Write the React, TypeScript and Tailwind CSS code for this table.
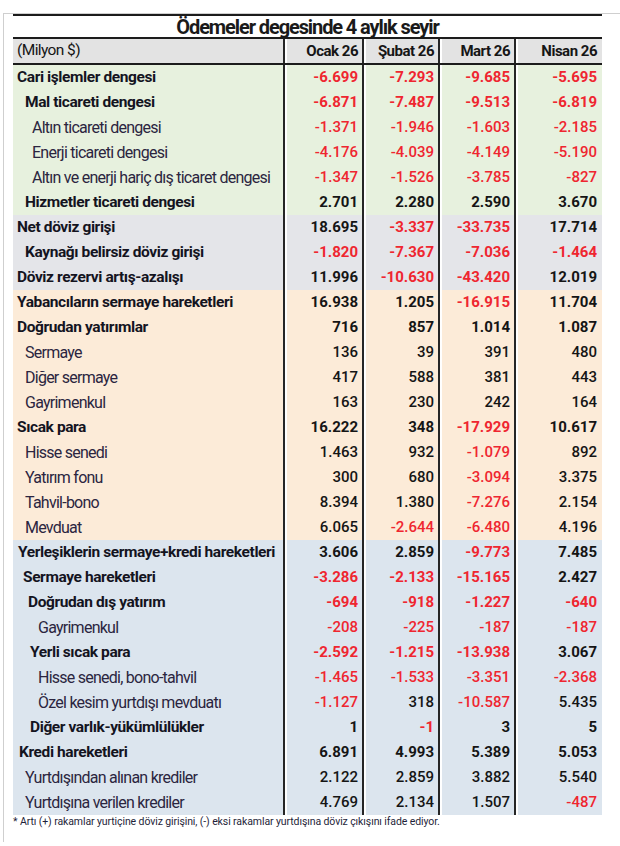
const bg = {
	green: "bg-[#e7f1de]",
	gray: "bg-[#e4e5e9]",
	peach: "bg-[#fcebd8]",
	blue: "bg-[#dce5ee]",
};

type Row = {
	label: string;
	indent: string;
	bold: boolean;
	section: keyof typeof bg;
	values: string[];
};

const rows: Row[] = [
	{ label: "Cari işlemler dengesi", indent: "pl-[4px]", bold: true, section: "green", values: ["-6.699", "-7.293", "-9.685", "-5.695"] },
	{ label: "Mal ticareti dengesi", indent: "pl-[12px]", bold: true, section: "green", values: ["-6.871", "-7.487", "-9.513", "-6.819"] },
	{ label: "Altın ticareti dengesi", indent: "pl-[19px]", bold: false, section: "green", values: ["-1.371", "-1.946", "-1.603", "-2.185"] },
	{ label: "Enerji ticareti dengesi", indent: "pl-[19px]", bold: false, section: "green", values: ["-4.176", "-4.039", "-4.149", "-5.190"] },
	{ label: "Altın ve enerji hariç dış ticaret dengesi", indent: "pl-[19px]", bold: false, section: "green", values: ["-1.347", "-1.526", "-3.785", "-827"] },
	{ label: "Hizmetler ticareti dengesi", indent: "pl-[12px]", bold: true, section: "green", values: ["2.701", "2.280", "2.590", "3.670"] },
	{ label: "Net döviz girişi", indent: "pl-[4px]", bold: true, section: "gray", values: ["18.695", "-3.337", "-33.735", "17.714"] },
	{ label: "Kaynağı belirsiz döviz girişi", indent: "pl-[12px]", bold: true, section: "gray", values: ["-1.820", "-7.367", "-7.036", "-1.464"] },
	{ label: "Döviz rezervi artış-azalışı", indent: "pl-[4px]", bold: true, section: "gray", values: ["11.996", "-10.630", "-43.420", "12.019"] },
	{ label: "Yabancıların sermaye hareketleri", indent: "pl-[4px]", bold: true, section: "peach", values: ["16.938", "1.205", "-16.915", "11.704"] },
	{ label: "Doğrudan yatırımlar", indent: "pl-[4px]", bold: true, section: "peach", values: ["716", "857", "1.014", "1.087"] },
	{ label: "Sermaye", indent: "pl-[12px]", bold: false, section: "peach", values: ["136", "39", "391", "480"] },
	{ label: "Diğer sermaye", indent: "pl-[12px]", bold: false, section: "peach", values: ["417", "588", "381", "443"] },
	{ label: "Gayrimenkul", indent: "pl-[12px]", bold: false, section: "peach", values: ["163", "230", "242", "164"] },
	{ label: "Sıcak para", indent: "pl-[4px]", bold: true, section: "peach", values: ["16.222", "348", "-17.929", "10.617"] },
	{ label: "Hisse senedi", indent: "pl-[12px]", bold: false, section: "peach", values: ["1.463", "932", "-1.079", "892"] },
	{ label: "Yatırım fonu", indent: "pl-[12px]", bold: false, section: "peach", values: ["300", "680", "-3.094", "3.375"] },
	{ label: "Tahvil-bono", indent: "pl-[12px]", bold: false, section: "peach", values: ["8.394", "1.380", "-7.276", "2.154"] },
	{ label: "Mevduat", indent: "pl-[12px]", bold: false, section: "peach", values: ["6.065", "-2.644", "-6.480", "4.196"] },
	{ label: "Yerleşiklerin sermaye+kredi hareketleri", indent: "pl-[5px]", bold: true, section: "blue", values: ["3.606", "2.859", "-9.773", "7.485"] },
	{ label: "Sermaye hareketleri", indent: "pl-[10px]", bold: true, section: "blue", values: ["-3.286", "-2.133", "-15.165", "2.427"] },
	{ label: "Doğrudan dış yatırım", indent: "pl-[15px]", bold: true, section: "blue", values: ["-694", "-918", "-1.227", "-640"] },
	{ label: "Gayrimenkul", indent: "pl-[25px]", bold: false, section: "blue", values: ["-208", "-225", "-187", "-187"] },
	{ label: "Yerli sıcak para", indent: "pl-[17px]", bold: true, section: "blue", values: ["-2.592", "-1.215", "-13.938", "3.067"] },
	{ label: "Hisse senedi, bono-tahvil", indent: "pl-[25px]", bold: false, section: "blue", values: ["-1.465", "-1.533", "-3.351", "-2.368"] },
	{ label: "Özel kesim yurtdışı mevduatı", indent: "pl-[25px]", bold: false, section: "blue", values: ["-1.127", "318", "-10.587", "5.435"] },
	{ label: "Diğer varlık-yükümlülükler", indent: "pl-[17px]", bold: true, section: "blue", values: ["1", "-1", "3", "5"] },
	{ label: "Kredi hareketleri", indent: "pl-[6px]", bold: true, section: "blue", values: ["6.891", "4.993", "5.389", "5.053"] },
	{ label: "Yurtdışından alınan krediler", indent: "pl-[12px]", bold: false, section: "blue", values: ["2.122", "2.859", "3.882", "5.540"] },
	{ label: "Yurtdışına verilen krediler", indent: "pl-[12px]", bold: false, section: "blue", values: ["4.769", "2.134", "1.507", "-487"] },
];

const months = ["Ocak 26", "Şubat 26", "Mart 26", "Nisan 26"];

const grid = "grid grid-cols-[270px_79px_76px_76px_88px]";
const valueCell =
	"flex items-center justify-end border-l-2 border-[#262626] shadow-[inset_2px_0_0_#ffffff] pr-[4px]";

const App = () => {
	return (
		<div className="min-h-[846px] bg-white pt-[13px] pl-[3px] font-['Roboto',sans-serif]">
			<div className="h-[829px] border-t border-l border-[#cfcfcf] pl-[9px]">
				<div className="w-[589px]">
					<div className="flex h-[25px] items-center justify-center border-t-2 border-b-2 border-[#1c1c1c] pt-[1px] text-[20px] font-bold leading-none tracking-[-1.1px] text-[#1a1a1a]">
						Ödemeler degesinde 4 aylık seyir
					</div>

					<div className={`${grid} h-[26px] border-b-2 border-[#1c1c1c] bg-[#e3e3e3] text-[15px] leading-none text-[#161616]`}>
						<div className="flex items-center pl-[4px] text-[15.5px] tracking-[-0.6px]">(Milyon $)</div>
						{months.map((m, i) => (
							<div key={m} className={`${valueCell} font-bold tracking-[-0.5px] ${i === 3 ? "pr-[5px]" : ""}`}>
								{m}
							</div>
						))}
					</div>

					{rows.map((row, r) => (
						<div key={r} className={`${grid} h-[25px] text-[15px] leading-none ${bg[row.section]}`}>
							<div
								className={`flex items-center whitespace-nowrap ${row.indent} ${
									row.bold
										? "text-[15.5px] font-bold tracking-[-0.4px] text-[#14141f]"
										: "text-[16px] tracking-[-0.75px] text-[#2b2540]"
								}`}
							>
								{row.label}
							</div>
							{row.values.map((v, i) => (
								<div
									key={i}
									className={`${valueCell} ${row.bold ? "font-bold" : "font-medium"} ${
										v.startsWith("-") ? "text-[#ef2630]" : "text-[#151515]"
									} ${i === 3 ? "pr-[5px]" : ""}`}
								>
									{v}
								</div>
							))}
						</div>
					))}

					<p className="mt-[1px] whitespace-nowrap text-[10.5px] leading-[12px] tracking-[-0.1px] text-[#1f1f3a]">
						* Artı (+) rakamlar yurtiçine döviz girişini, (-) eksi rakamlar yurtdışına döviz çıkışını ifade ediyor.
					</p>
				</div>
			</div>
		</div>
	);
};

export default App;
